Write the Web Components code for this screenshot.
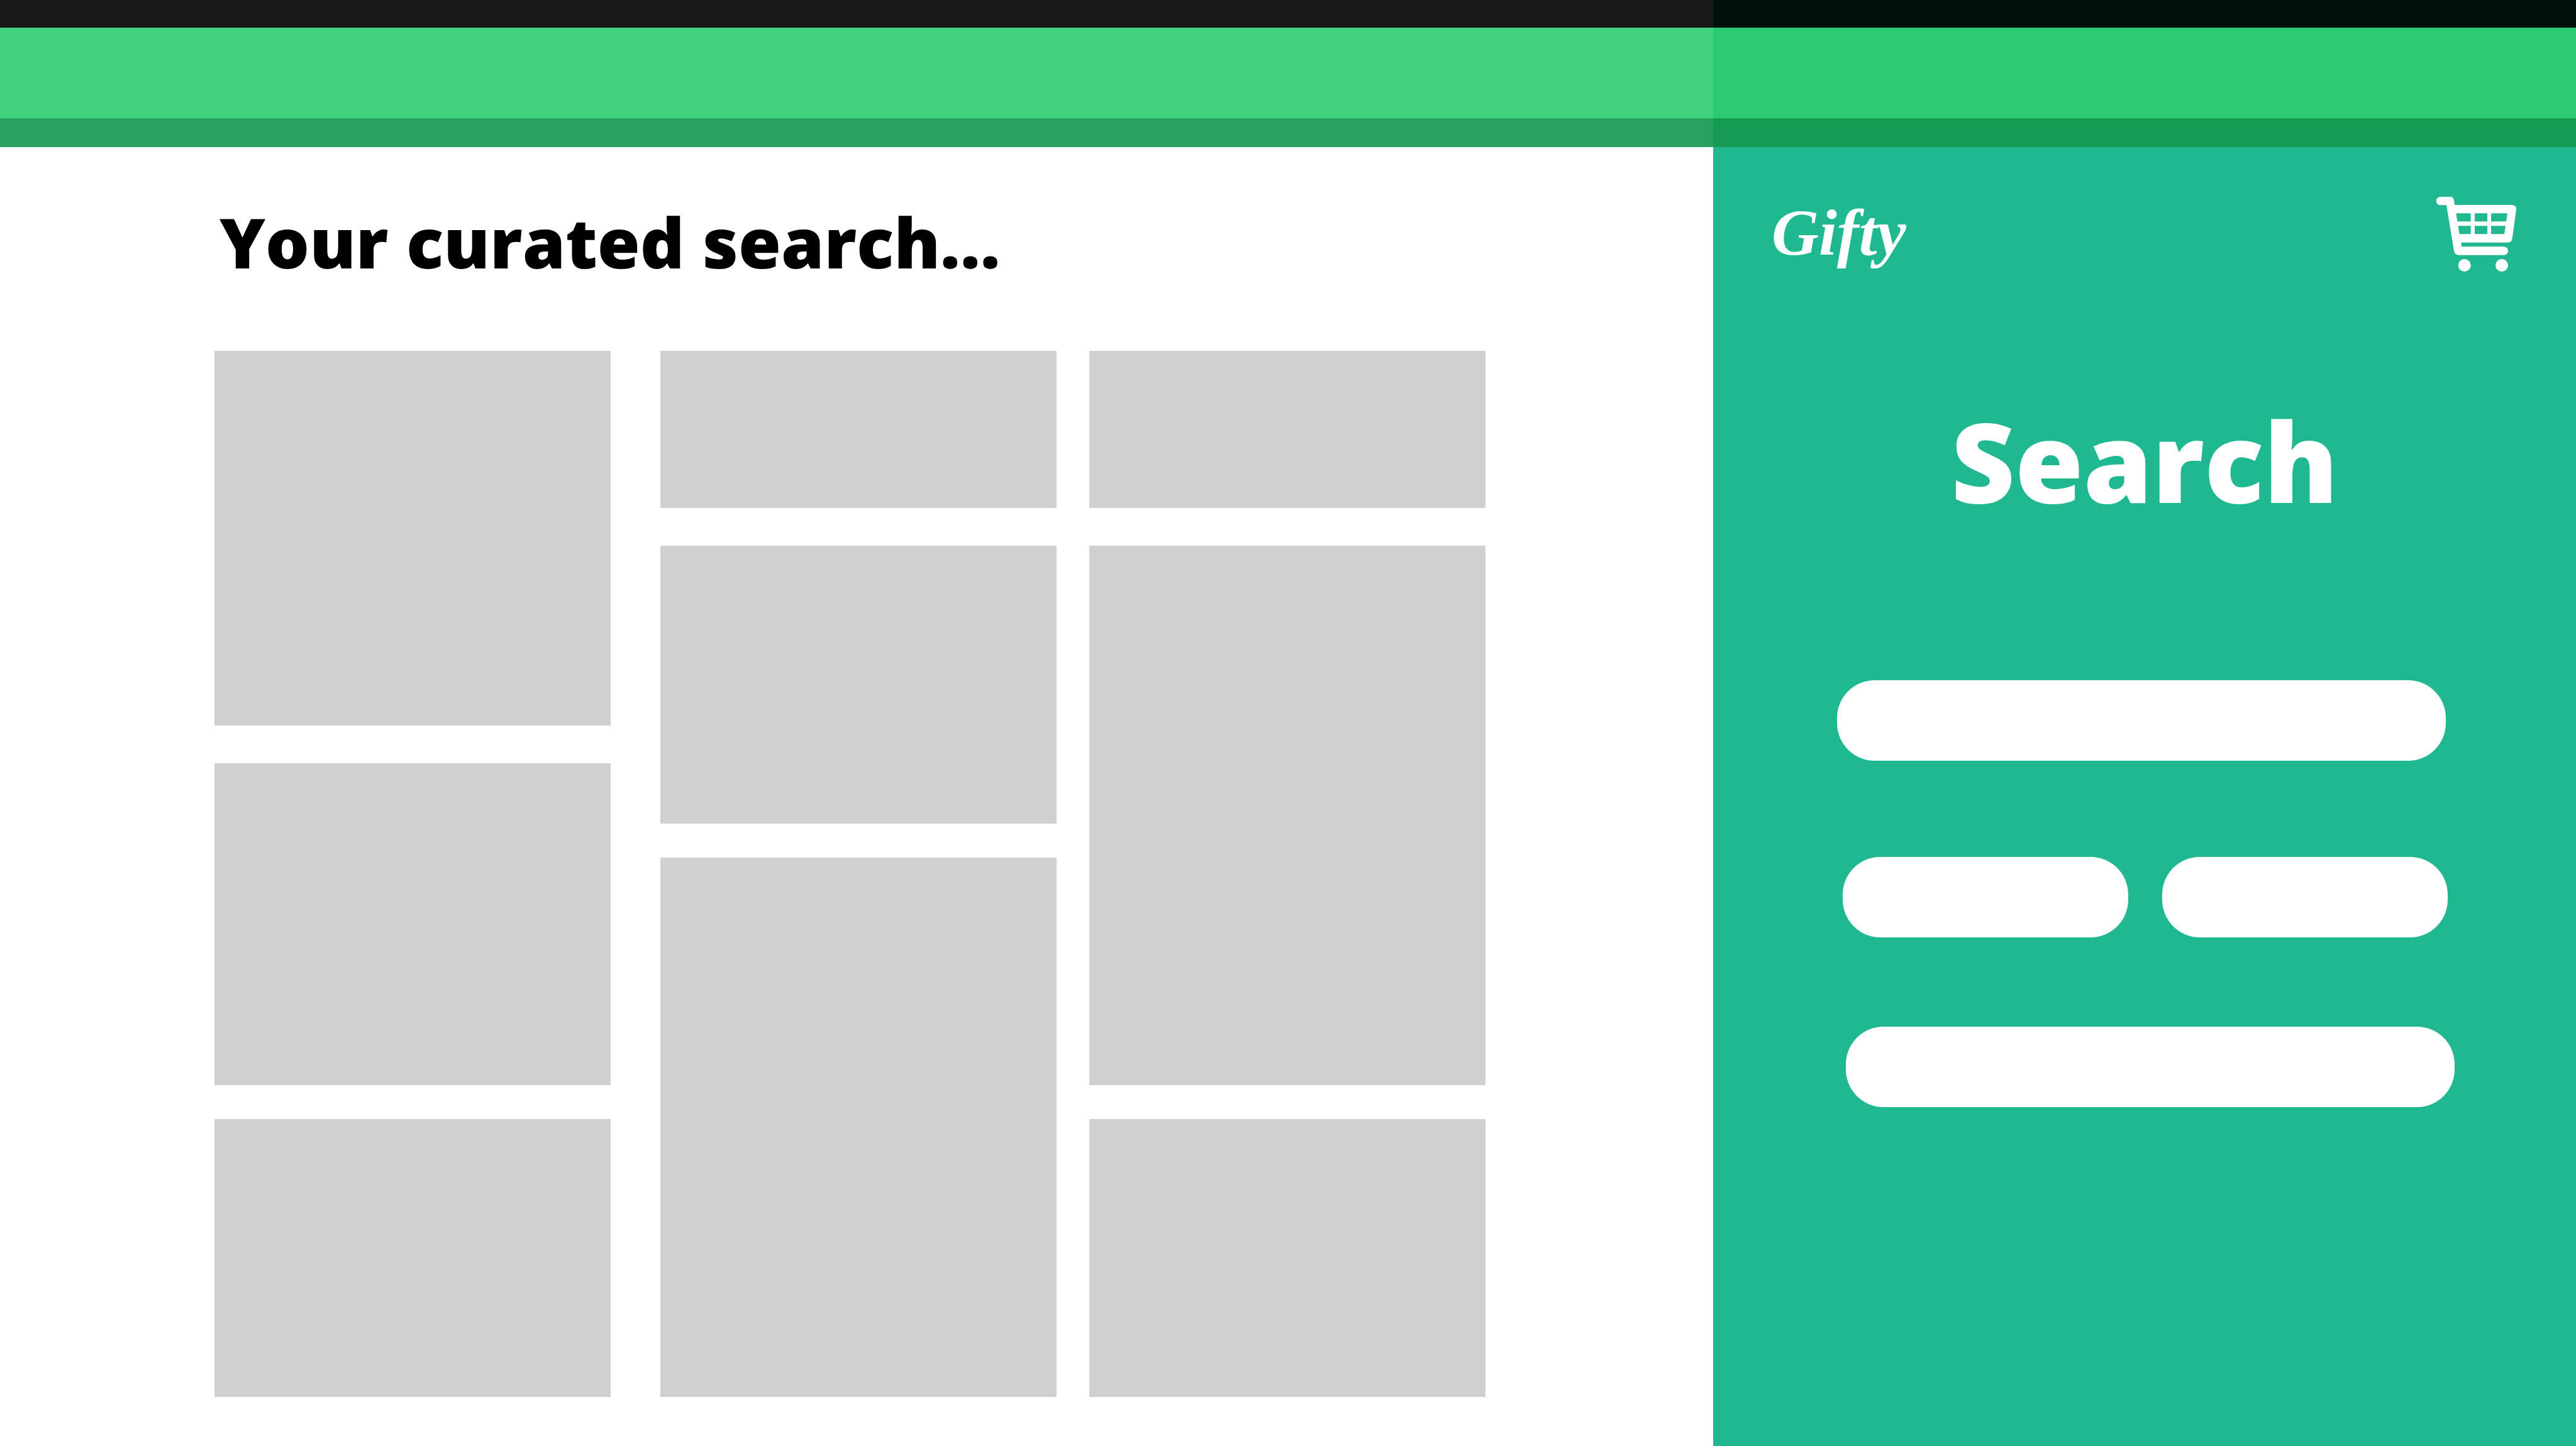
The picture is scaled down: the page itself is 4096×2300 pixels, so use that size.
<!DOCTYPE html>
<html lang="en">
<head>
<meta charset="utf-8">
<title>Gifty – Search</title>
<style>
  body { margin: 0; background: #fff; }
</style>
</head>
<body>
<gifty-app>
  <top-banner slot="banner"></top-banner>
  <curated-results slot="results" heading="Your curated search...">
    <result-column slot="columns">
      <result-card size="large"></result-card>
      <result-card size="medium"></result-card>
      <result-card></result-card>
    </result-column>
    <result-column slot="columns">
      <result-card size="small"></result-card>
      <result-card></result-card>
      <result-card size="tall"></result-card>
    </result-column>
    <result-column slot="columns">
      <result-card size="small"></result-card>
      <result-card size="tall"></result-card>
      <result-card></result-card>
    </result-column>
  </curated-results>
  <search-panel slot="panel">
    <brand-logo slot="brand">Gifty</brand-logo>
    <cart-button slot="cart"></cart-button>
    <span slot="title">Search</span>
  </search-panel>
</gifty-app>

<script>
function define(name, markup, setup) {
  const template = document.createElement('template');
  template.innerHTML = markup;
  customElements.define(name, class extends HTMLElement {
    constructor() {
      super();
      this.attachShadow({ mode: 'open' }).append(template.content.cloneNode(true));
    }
    connectedCallback() {
      if (setup) setup(this, this.shadowRoot);
    }
  });
}

define('gifty-app', `
  <style>
    :host {
      display: grid;
      grid-template-columns: minmax(0, 2724fr) minmax(0, 1372fr);
      grid-template-rows: auto 1fr;
      min-height: 100vh;
      font-family: "Open Sans", "Noto Sans", sans-serif;
      color: #000;
    }
    ::slotted([slot="banner"]) { grid-area: 1 / 1 / 2 / 3; z-index: 1; }
    ::slotted([slot="results"]) { grid-area: 2 / 1 / 3 / 2; }
    ::slotted([slot="panel"]) { grid-area: 1 / 2 / 3 / 3; }
  </style>
  <slot name="banner"></slot>
  <slot name="results"></slot>
  <slot name="panel"></slot>
`);

/* Translucent strip: the panel below tints its right-hand part. */
define('top-banner', `
  <style>
    :host { display: flex; flex-direction: column; opacity: .9; }
    .status { height: 44px; background: #000; }
    .bar { height: 144px; background: #2ecd71; }
    .edge { height: 46px; background: #14984e; }
  </style>
  <div class="status"></div>
  <div class="bar"></div>
  <div class="edge"></div>
`);

define('curated-results', `
  <style>
    :host { display: block; padding: 72px 362px 78px 341px; }
    h1 { margin: 0 0 96px 8px; font-size: 110px; line-height: 156px; font-weight: 800; white-space: nowrap; }
    .columns { display: flex; gap: 52px; align-items: flex-start; }
    ::slotted(:first-child) { margin-right: 27px; }
  </style>
  <h1></h1>
  <div class="columns"><slot name="columns"></slot></div>
`, (host, root) => {
  root.querySelector('h1').textContent = host.getAttribute('heading');
});

define('result-column', `
  <style>
    :host { display: flex; flex: 1; flex-direction: column; gap: 54px; }
    ::slotted(:first-child) { margin-bottom: 6px; }
  </style>
  <slot></slot>
`);

define('result-card', `
  <style>
    :host { display: block; height: 442px; background: #d0d0d0; }
    :host([size="small"]) { height: 250px; }
    :host([size="medium"]) { height: 512px; }
    :host([size="large"]) { height: 596px; }
    :host([size="tall"]) { height: 858px; }
  </style>
`);

define('brand-logo', `
  <style>
    :host { display: block; }
    a {
      display: block; color: inherit; text-decoration: none;
      font: italic bold 104px/114px "Liberation Serif", serif;
    }
  </style>
  <a href="#"><slot></slot></a>
`);

define('cart-button', `
  <style>
    :host { display: block; }
    button { display: block; margin: 0; padding: 0; border: 0; background: none; color: inherit; cursor: pointer; }
    svg { display: block; width: 127px; height: 119px; }
  </style>
  <button type="button" aria-label="Cart">
    <svg viewBox="72 69 381 357" fill="currentColor" aria-hidden="true">
      <path fill-rule="evenodd" d="M91 69H137Q154 69 156 86L159 108H434Q453 110 453 128L434 268Q432 287 414 287H190L192 307H394A20 20 0 0 1 394 347H177Q159 346 156 328L120 109H91A20 20 0 0 1 91 69Z
        M166 148L172 187H236V148Z M255 148V187H315V148Z M333 148V187H405L411 148Z
        M176 208L182 247H236V208Z M255 208V247H315V208Z M333 208V247H396L402 208Z"/>
      <circle cx="206" cy="396" r="30"/>
      <circle cx="384" cy="396" r="30"/>
    </svg>
  </button>
`);

define('search-field', `
  <style>
    :host { display: block; flex: 1; min-width: 0; }
    input {
      display: block; box-sizing: border-box; width: 100%; height: 128px;
      padding: 0 60px; border: 0; border-radius: 60px; background: #fff;
      font: 48px "Open Sans", sans-serif; color: #000;
    }
  </style>
  <input type="text">
`, (host, root) => {
  root.querySelector('input').setAttribute('aria-label', host.getAttribute('label'));
});

define('search-panel', `
  <style>
    :host { display: block; padding-top: 313px; background: #20b890; color: #fff; }
    header { display: flex; justify-content: space-between; align-items: flex-start; padding: 0 95px 0 93px; }
    h2 { margin: 180px 0 230px; font-size: 176px; line-height: 240px; font-weight: 800; text-align: center; }
    form { display: flex; flex-direction: column; padding: 0 193px 0 197px; }
    .keywords { margin-right: 14px; }
    .range { display: flex; gap: 54px; margin: 153px 11px 142px 9px; }
    .recipient { margin-left: 14px; }
  </style>
  <header><slot name="brand"></slot><slot name="cart"></slot></header>
  <h2><slot name="title"></slot></h2>
  <form>
    <search-field class="keywords" label="Keywords"></search-field>
    <div class="range">
      <search-field label="Minimum price"></search-field>
      <search-field label="Maximum price"></search-field>
    </div>
    <search-field class="recipient" label="Recipient"></search-field>
  </form>
`);
</script>
</body>
</html>
